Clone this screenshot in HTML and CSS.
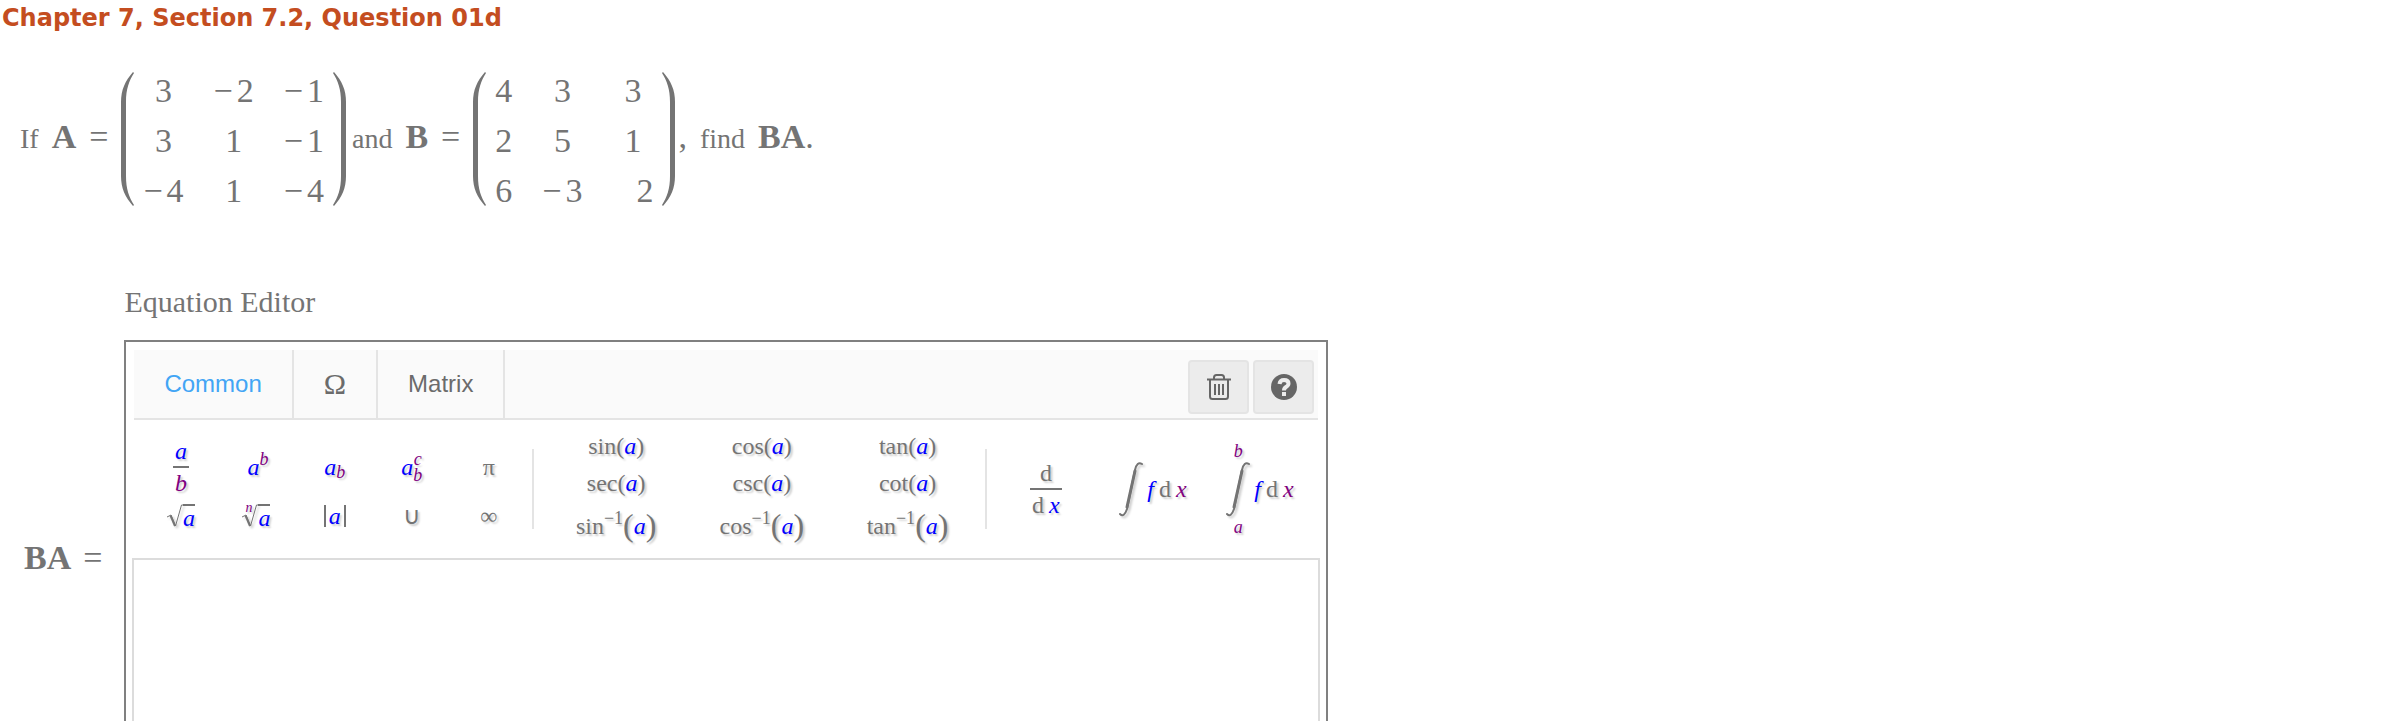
FILE: index.html
```html
<!DOCTYPE html>
<html lang="en">
<head>
  <meta charset="UTF-8">
  <meta name="viewport" content="width=device-width, initial-scale=1.0">
  <title>Chapter 7, Section 7.2, Question 01d</title>
  <link rel="stylesheet" href="styles.css">
</head>
<body>
  <h1 class="title">Chapter 7, Section 7.2, Question 01d</h1>

  <!-- Question -->
  <div class="problem">
    <div class="prose"><span>If</span><b>A</b><span class="eq">=</span></div>
    <svg class="paren" viewBox="0 0 13 134"><path d="M12 0C4 9 0 18 0 30V104C0 116 4 125 12 134L13 133C8 125 5 117 5 104V30C5 17 8 9 13 1Z"/></svg>
    <table class="matrix">
      <tr><td>3</td><td><span class="minus">−</span>2</td><td><span class="minus">−</span>1</td></tr>
      <tr><td>3</td><td>1</td><td><span class="minus">−</span>1</td></tr>
      <tr><td><span class="minus">−</span>4</td><td>1</td><td><span class="minus">−</span>4</td></tr>
    </table>
    <svg class="paren" viewBox="0 0 13 134"><path d="M1 0C9 9 13 18 13 30V104C13 116 9 125 1 134L0 133C5 125 8 117 8 104V30C8 17 5 9 0 1Z"/></svg>
    <div class="prose after"><span>and</span><b>B</b><span class="eq">=</span></div>
    <svg class="paren" viewBox="0 0 13 134"><path d="M12 0C4 9 0 18 0 30V104C0 116 4 125 12 134L13 133C8 125 5 117 5 104V30C5 17 8 9 13 1Z"/></svg>
    <table class="matrix">
      <tr><td>4</td><td>3</td><td>3</td></tr>
      <tr><td>2</td><td>5</td><td>1</td></tr>
      <tr><td>6</td><td><span class="minus">−</span>3</td><td class="shifted">2</td></tr>
    </table>
    <svg class="paren" viewBox="0 0 13 134"><path d="M1 0C9 9 13 18 13 30V104C13 116 9 125 1 134L0 133C5 125 8 117 8 104V30C8 17 5 9 0 1Z"/></svg>
    <div class="prose end"><span class="mark">,</span><span>find</span><span class="mark"><b>BA</b>.</span></div>
  </div>

  <!-- Answer -->
  <div class="answer">
    <div class="answer-label"><b>BA</b><span class="eq">=</span></div>
    <div class="field">
      <label class="field-label" for="equation">Equation Editor</label>
      <div class="editor">
        <div class="toolbar">
          <button type="button" class="tab active">Common</button>
          <button type="button" class="tab symbol">Ω</button>
          <button type="button" class="tab">Matrix</button>
          <div class="actions">
            <button type="button" class="action" aria-label="Clear">
              <svg width="24" height="26" viewBox="0 0 24 26" fill="none" stroke="#666" stroke-width="2">
                <path d="M0 5.500H24M7 5V3.500Q7 1 9.500 1H14.500Q17 1 17 3.500V5M3 6V22.500Q3 25 5.500 25H18.500Q21 25 21 22.500V6M8 10V21M12 10V21M16 10V21"/>
              </svg>
            </button>
            <button type="button" class="action" aria-label="Help">
              <svg width="26" height="26" viewBox="0 0 26 26">
                <circle cx="13" cy="13" r="13" fill="#666"/>
                <path d="M8.500 10Q9 6 13 6Q17.500 6 17.500 9.500Q17.500 11.500 15 13Q13 14.200 13 16.500" fill="none" stroke="#ececec" stroke-width="4"/>
                <path d="M11 18H15V22H11Z" fill="#ececec"/>
              </svg>
            </button>
          </div>
        </div>

        <div class="palette">
          <div class="group basic">
            <button type="button"><span class="frac"><i class="a">a</i><i class="b">b</i></span></button>
            <button type="button"><i class="a">a</i><sup class="b">b</sup></button>
            <button type="button"><i class="a">a</i><sub class="b">b</sub></button>
            <button type="button"><i class="a">a</i><span class="scripts b"><i>c</i><i>b</i></span></button>
            <button type="button">π</button>
            <button type="button"><svg class="radical" width="16" height="24" viewBox="0 0 16 24"><path d="M0 13L4 11L8.500 22L14.500 1H16"/><path class="thick" d="M3.500 11.500L8 22"/></svg><i class="a radicand">a</i></button>
            <button type="button"><i class="b index">n</i><svg class="radical" width="16" height="24" viewBox="0 0 16 24"><path d="M0 13L4 11L8.500 22L14.500 1H16"/><path class="thick" d="M3.500 11.500L8 22"/></svg><i class="a radicand">a</i></button>
            <button type="button"><span class="abs"><i class="a">a</i></span></button>
            <button type="button">∪</button>
            <button type="button">∞</button>
          </div>
          <div class="divider"></div>
          <div class="group trig">
            <button type="button">sin(<i class="a">a</i>)</button>
            <button type="button">cos(<i class="a">a</i>)</button>
            <button type="button">tan(<i class="a">a</i>)</button>
            <button type="button">sec(<i class="a">a</i>)</button>
            <button type="button">csc(<i class="a">a</i>)</button>
            <button type="button">cot(<i class="a">a</i>)</button>
            <button type="button">sin<sup>−1</sup><span class="big">(</span><i class="a">a</i><span class="big">)</span></button>
            <button type="button">cos<sup>−1</sup><span class="big">(</span><i class="a">a</i><span class="big">)</span></button>
            <button type="button">tan<sup>−1</sup><span class="big">(</span><i class="a">a</i><span class="big">)</span></button>
          </div>
          <div class="divider"></div>
          <div class="group calculus">
            <button type="button"><span class="frac"><span>d</span><span class="dx">d<i class="a">x</i></span></span></button>
            <button type="button" aria-label="Integral"><svg class="integral" width="24" height="56" viewBox="0 0 24 56"><path d="M1 53Q5 57 8 48L16 9Q18 0 23 3"/><path class="stem" d="M8 46L16 10"/></svg><span class="dx"><i class="a">f</i>d<i class="b">x</i></span></button>
            <button type="button" aria-label="Definite integral"><span class="limits"><i class="b">b</i><svg class="integral" width="24" height="56" viewBox="0 0 24 56"><path d="M1 53Q5 57 8 48L16 9Q18 0 23 3"/><path class="stem" d="M8 46L16 10"/></svg><i class="b">a</i></span><span class="dx"><i class="a">f</i>d<i class="b">x</i></span></button>
          </div>
        </div>

        <textarea id="equation" class="input"></textarea>
      </div>
    </div>
  </div>
</body>
</html>
```
FILE: styles.css
```css
* {
  box-sizing: border-box;
}
body {
  margin: 0;
  height: 100vh;
  overflow: hidden;
  background: white;
  color: #747474;
  font-family: "Liberation Serif", "Times New Roman", serif;
}
.title {
  margin: 0;
  padding-left: 2px;
  color: #c44d20;
  font-family: "DejaVu Sans", Verdana, sans-serif;
  font-size: 24px;
  line-height: 36px;
}

/* Question */
.problem {
  display: flex;
  align-items: center;
  padding: 30px 20px 0;
}
.prose {
  display: flex;
  align-items: baseline;
  gap: 13px;
  padding-bottom: 8px;
  font-size: 28px;
}
.prose b, .eq, .mark, .answer-label {
  font-size: 34px;
}
.prose .eq {
  margin-right: 13px;
}
.prose.after {
  padding-left: 6px;
}
.prose.end {
  padding-left: 3px;
}
.paren {
  width: 13px;
  height: 134px;
  margin-bottom: 4px;
  fill: #747474;
}
.matrix {
  border-collapse: collapse;
  font-size: 34px;
  line-height: 50px;
  text-align: center;
}
.matrix td {
  padding: 0 15px;
}
.matrix td:first-child {
  padding-left: 9px;
}
.matrix td:last-child {
  padding-right: 9px;
}
.matrix .shifted {
  padding-left: 39px;
}
.minus {
  margin-right: 4px;
}

/* Answer */
.answer {
  display: flex;
  align-items: center;
  gap: 22px;
  margin-top: 69px;
  padding: 0 24px;
}
.answer-label {
  display: flex;
  gap: 12px;
}
.field {
  flex: 1;
  max-width: 1204px;
}
.field-label {
  display: block;
  margin-bottom: 21px;
  font-size: 30px;
  line-height: 34px;
}
.editor {
  padding: 8px 6px;
  border: 2px solid #808080;
}
.toolbar {
  display: flex;
  height: 70px;
  margin: 0 2px;
  background: #fafafa;
  border-bottom: 2px solid #e4e4e4;
}
.tab {
  padding: 0 30px;
  background: none;
  border: none;
  border-right: 2px solid #e4e4e4;
  color: #6b6b6b;
  font-family: "Liberation Sans", Arial, sans-serif;
  font-size: 24px;
  cursor: pointer;
}
.tab.active {
  color: #42a5f5;
}
.tab.symbol {
  font-family: "Liberation Serif", serif;
  font-size: 30px;
}
.actions {
  display: flex;
  gap: 4px;
  margin-left: auto;
  padding: 10px 4px 4px 0;
}
.action {
  display: flex;
  align-items: center;
  justify-content: center;
  width: 61px;
  padding: 0;
  background: #ececec;
  border: 2px solid #e4e4e4;
  border-radius: 4px;
  cursor: pointer;
}

/* Button palette */
.palette {
  display: flex;
  align-items: center;
  height: 138px;
  margin: 0 2px;
}
.divider {
  width: 2px;
  height: 80px;
  background: #e4e4e4;
}
.group {
  display: grid;
}
.basic {
  flex: 398;
  grid-template-columns: repeat(5, 1fr);
  grid-template-rows: 46px 36px;
  row-gap: 8px;
  padding: 0 5px 0 8px;
}
.trig {
  flex: 452;
  grid-template-columns: repeat(3, 1fr);
  grid-template-rows: 38px 36px 50px;
  padding: 0 5px 0 9px;
}
.calculus {
  flex: 332;
  grid-template-columns: repeat(3, 1fr);
  padding: 0 5px;
}
.group button {
  display: flex;
  align-items: center;
  justify-content: center;
  padding: 0;
  background: none;
  border: none;
  color: #747474;
  font-family: inherit;
  font-size: 24px;
  line-height: 28px;
  text-shadow: 2px 2px 2px rgba(0, 0, 0, 0.2);
  cursor: pointer;
}
.a {
  color: #0000ff;
}
.b {
  color: #800080;
}
.frac {
  display: flex;
  flex-direction: column;
  align-items: center;
  line-height: 30px;
}
.frac > :last-child {
  padding: 0 2px;
  border-top: 2px solid #747474;
}
.dx {
  display: flex;
  gap: 5px;
}
sup, sub {
  font-size: 18px;
  line-height: 20px;
}
sup {
  padding-bottom: 16px;
}
sub {
  padding-top: 10px;
}
.basic sup, .basic sub {
  font-style: italic;
}
.scripts {
  display: flex;
  flex-direction: column;
  font-size: 18px;
  line-height: 16px;
}
.radical, .integral {
  fill: none;
  stroke: #747474;
  filter: drop-shadow(2px 2px 1px rgba(0, 0, 0, 0.2));
}
.radical .thick {
  stroke-width: 2;
}
.integral {
  stroke-width: 2;
  stroke-linecap: round;
}
.integral .stem {
  stroke-width: 3;
}
.integral + .dx, .limits + .dx {
  padding-left: 4px;
}
.radicand {
  height: 24px;
  border-top: 2px solid #747474;
  line-height: 24px;
}
.index {
  margin-right: -10px;
  padding-bottom: 16px;
  font-size: 14px;
  line-height: 14px;
}
.abs {
  padding: 0 3px;
  border: solid #747474;
  border-width: 0 2px;
  line-height: 22px;
}
.big {
  padding-bottom: 2px;
  font-size: 32px;
}
.limits {
  display: flex;
  flex-direction: column;
  align-items: center;
  font-size: 18px;
  line-height: 20px;
}
.input {
  display: block;
  width: 100%;
  height: 262px;
  padding: 12px;
  border: 2px solid #dcdcdc;
  outline: none;
  resize: none;
  color: #747474;
  font-family: inherit;
  font-size: 30px;
}
```
